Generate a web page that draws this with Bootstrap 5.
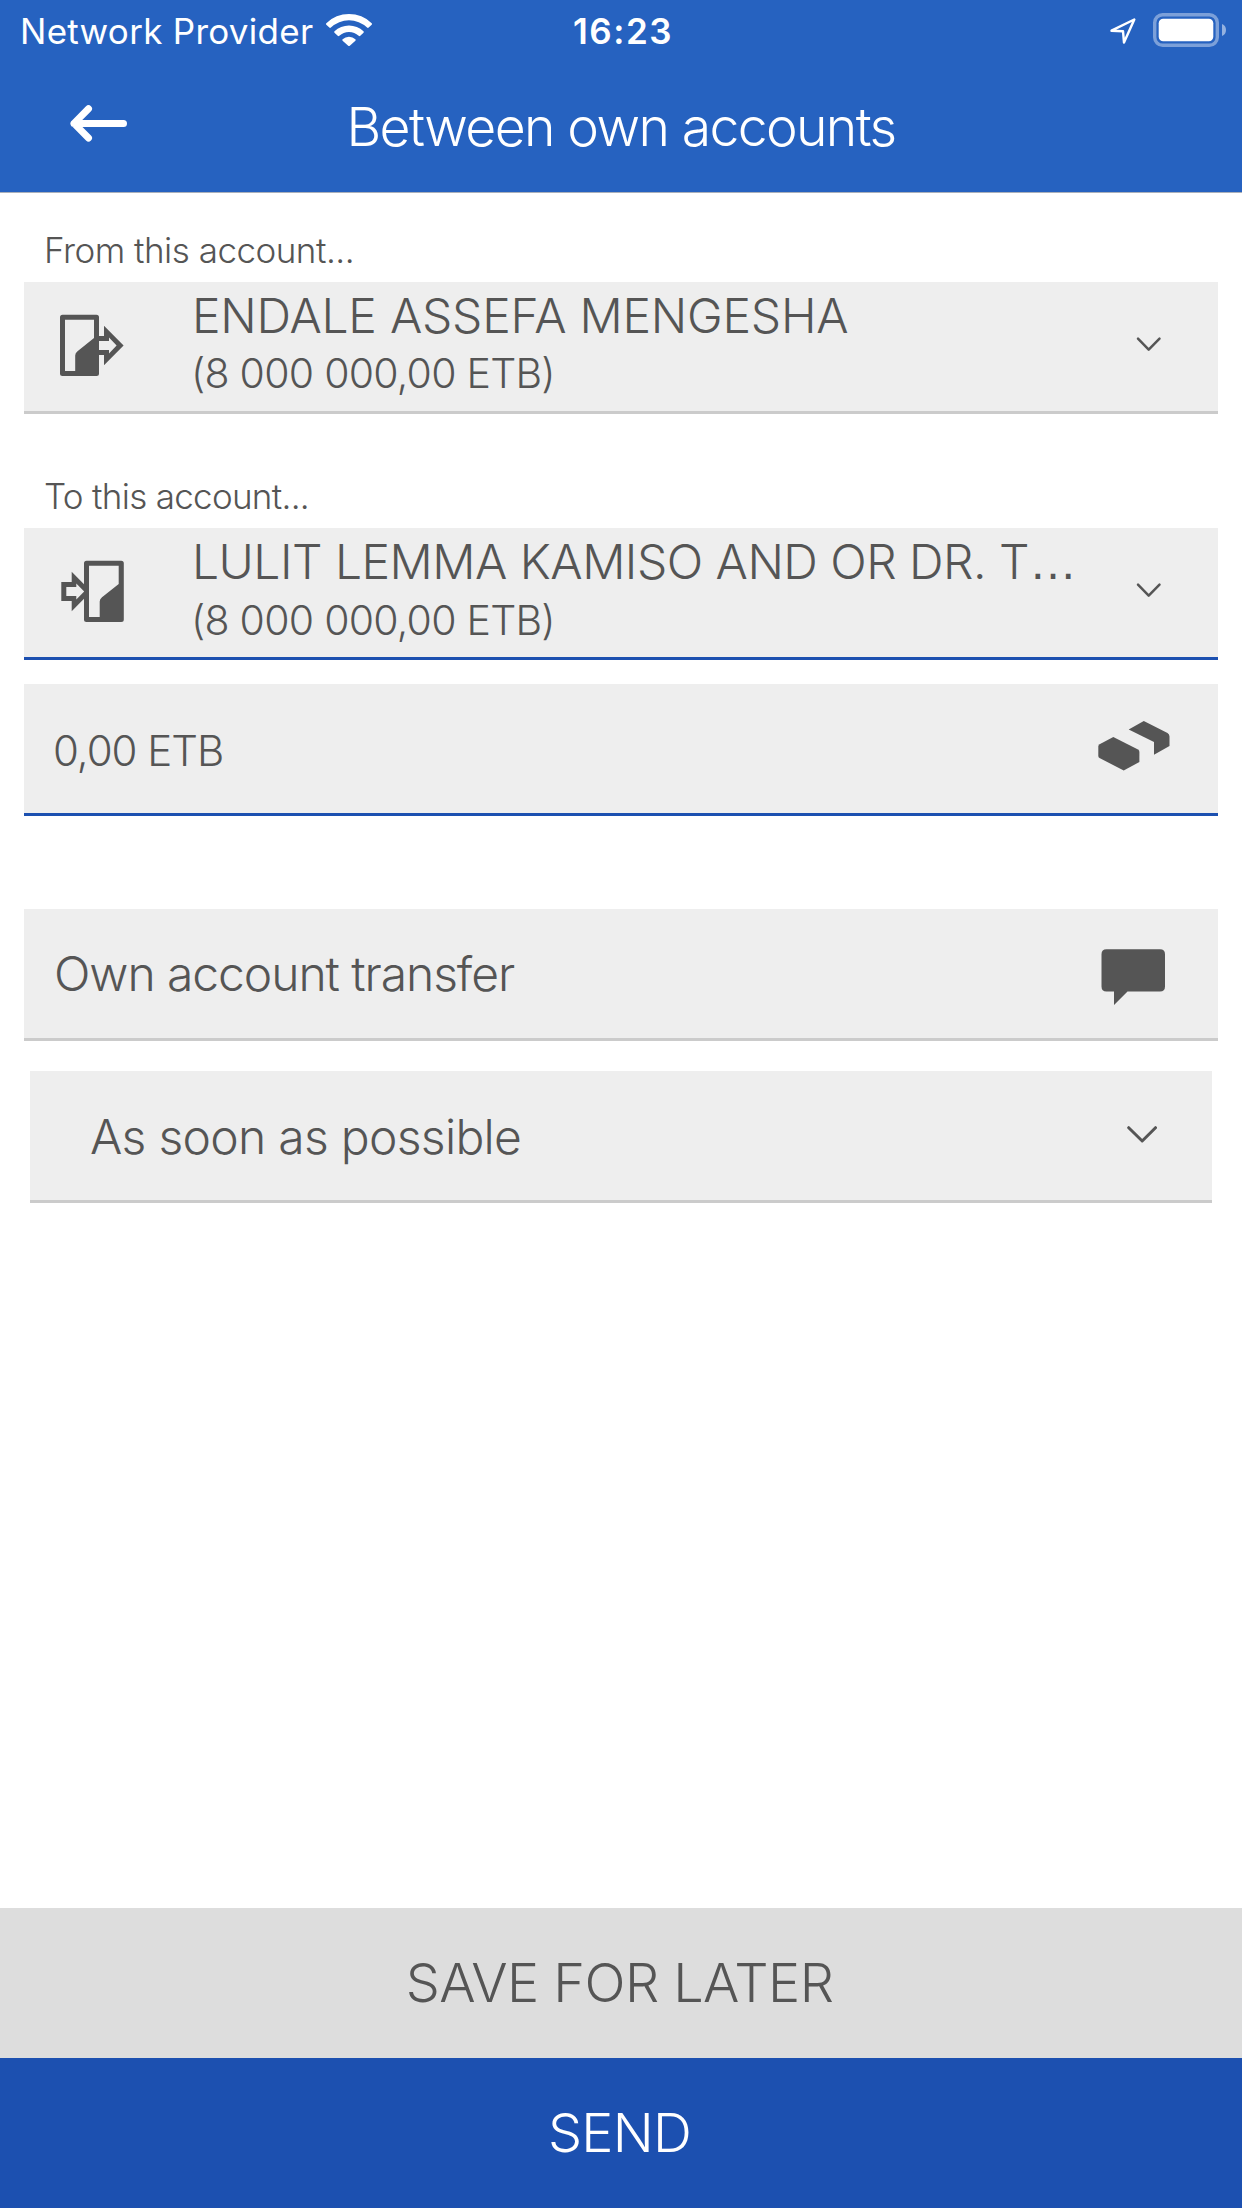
<!DOCTYPE html>
<html lang="en">
<head>
<meta charset="utf-8">
<meta name="viewport" content="width=device-width, initial-scale=1">
<title>Between own accounts</title>
<link href="https://cdn.jsdelivr.net/npm/bootstrap@5.3.0/dist/css/bootstrap.min.css" rel="stylesheet">
<style>
body{font-family:Inter,"Liberation Sans",sans-serif;font-weight:300;color:#555;background:#fff;font-kerning:normal}
svg{display:block;flex:none}
.screen{height:2208px;overflow:hidden}
.app-header{height:193px;background:#2662c0;border-bottom:1px solid #aab0ba}
.status-bar{height:62px;font-size:35px;line-height:62px;font-weight:400;padding:0 16px 0 20px}
.status-side{flex:1 1 0}
.carrier{letter-spacing:.28px}
.clock{font-weight:600;letter-spacing:1.5px}
.wifi{margin-left:12px}
.title-bar{height:130px}
.title-bar .side{width:200px}
.page-title{font-size:53.5px;line-height:129px;font-weight:300;letter-spacing:-1.64px}
.fields{padding:0 24px}
.field-label{height:89px;font-size:35px;line-height:40px;padding:0 0 12px 20px;letter-spacing:-.5px}
.field-label.second{height:114px;letter-spacing:-.7px}
.field-box{height:132px;background:#eee;border-bottom:3px solid #cbcbcb}
.field-box.active{border-bottom-color:#1c50b0}
.account{padding:0 56px 0 36px}
.account-text{width:900px;margin-left:68px;padding-top:4px}
.account-name{font-size:48px;line-height:59px;letter-spacing:-.24px}
.account-name.long{letter-spacing:-.52px}
.dots{font-family:"Liberation Sans",sans-serif;letter-spacing:0}
.account-sum{font-size:41px;line-height:57px;letter-spacing:-.75px;margin-left:-1px}
.amount{margin-top:24px;padding:0 48px 0 29px}
.amount-value{font-size:42px;letter-spacing:-1.01px;line-height:60px;padding-top:4px}
.purpose{margin-top:93px;padding:0 53px 0 30px}
.purpose-text{font-size:48px;letter-spacing:-1.07px;line-height:60px}
.timing{margin:30px 6px 0;padding:0 55px 0 60px}
.timing-text{font-size:48px;letter-spacing:-.71px;line-height:60px;padding-top:3px}
.action{height:150px;border:0;font-size:54px;font-weight:300;line-height:150px;padding:0 3px 0 0}
.action-save{background:#ddd;color:#555;letter-spacing:-.57px}
.action-send{background:#1c50b0;color:#fff;letter-spacing:-.75px}
</style>
</head>
<body>
<div class="screen d-flex flex-column">
  <header class="app-header text-white">
    <div class="status-bar d-flex">
      <div class="status-side d-flex">
        <span class="carrier text-nowrap">Network Provider</span>
        <svg class="wifi" width="48" height="62" viewBox="325 0 48 62" fill="#fff">
          <path d="M326.3 23.2a32.4 32.4 0 0 1 45.4 0q.7.8 0 1.6l-3 2.8q-.8.7-1.6 0a26.2 26.2 0 0 0-36.200 0q-.8.7-1.600 0l-3-2.800q-.7-.8 0-1.600z"/>
          <path d="M334.500 31.200a21 21 0 0 1 29 0q.7.800 0 1.600l-3.200 3q-.8.700-1.600 0a14.200 14.200 0 0 0-19.400 0q-.8.700-1.600 0l-3.200-3q-.7-.8 0-1.600z"/>
          <path d="M342.600 39.300a9.300 9.300 0 0 1 12.800 0q.7.700 0 1.400l-5.600 5q-.8.700-1.600 0l-5.600-5q-.7-.7 0-1.400z"/>
        </svg>
      </div>
      <span class="clock">16:23</span>
      <div class="status-side d-flex justify-content-end">
        <svg width="118" height="62" viewBox="1108 0 118 62">
          <path d="M1111.500 30.700L1134.300 19.500L1124 42.600L1123 31.200Z" fill="none" stroke="#fff" stroke-width="2.400" stroke-linejoin="round"/>
          <rect x="1154.700" y="14.700" width="62.600" height="30.600" rx="8" fill="none" stroke="#fff" stroke-opacity=".4" stroke-width="3.400"/>
          <rect x="1158.700" y="18.700" width="54.600" height="22.600" rx="4.500" fill="#fff"/>
          <path d="M1222 24q4 1.500 4 6t-4 6z" fill="#fff" fill-opacity=".5"/>
        </svg>
      </div>
    </div>
    <div class="title-bar d-flex justify-content-between">
      <div class="side">
        <svg width="150" height="130" viewBox="0 62 150 130" fill="none" stroke="#fff" stroke-width="7" stroke-linecap="round" stroke-linejoin="round"><path d="M74 123.400H123.500M88.500 108.700L74 123.400L88.500 138"/></svg>
      </div>
      <h1 class="page-title m-0 text-nowrap">Between own accounts</h1>
      <div class="side"></div>
    </div>
  </header>

  <main class="fields flex-grow-1">
    <div class="field-label d-flex align-items-end">From this account...</div>
    <div class="field-box account d-flex">
      <svg width="64" height="129" viewBox="60 282 64 129">
        <path fill="#555" fill-rule="evenodd" d="M62.500 314.700H96.500Q99 314.700 99 317.200V373.500Q99 376 96.500 376H62.500Q60 376 60 373.500V317.200Q60 314.700 62.500 314.700ZM65 319.800V371H75.200V355.500Q75.200 353 77.500 351.200L94 338V319.800Z"/>
        <path fill="#555" fill-rule="evenodd" d="M98 336H104V325.800L123.600 345.500L104 365.200V355H98ZM98 341V350H109V353.500L116.600 345.500L109 337.500V341Z"/>
      </svg>
      <div class="account-text text-nowrap">
        <div class="account-name">ENDALE ASSEFA MENGESHA</div>
        <div class="account-sum">(8 000 000,00 ETB)</div>
      </div>
      <svg class="ms-auto" width="26" height="129" viewBox="1136 282 26 129" fill="none" stroke="#555" stroke-width="2.500" stroke-linecap="round" stroke-linejoin="round"><path d="M1138 338.700L1148.700 349.700L1159.500 338.700"/></svg>
    </div>

    <div class="field-label second d-flex align-items-end">To this account...</div>
    <div class="field-box active account d-flex">
      <svg width="64" height="129" viewBox="60 528 64 129">
        <path fill="#555" fill-rule="evenodd" d="M86.500 560.700H121.300Q123.800 560.700 123.800 563.200V619.500Q123.800 622 121.300 622H86.500Q84 622 84 619.500V563.200Q84 560.700 86.500 560.700ZM89 565.800V617H99.700V601.500Q99.700 599 102 597.200L118.700 584V565.800Z"/>
        <path fill="#555" fill-rule="evenodd" d="M61.300 582H71.700V571.800L85 585.200V597.800L71.700 611.200V601H61.300ZM66.300 587V596H76.300V599.500L84.200 591.500L76.300 583.500V587Z"/>
      </svg>
      <div class="account-text text-nowrap">
        <div class="account-name long">LULIT LEMMA KAMISO AND OR DR. T<span class="dots">…</span></div>
        <div class="account-sum">(8 000 000,00 ETB)</div>
      </div>
      <svg class="ms-auto" width="26" height="129" viewBox="1136 528 26 129" fill="none" stroke="#555" stroke-width="2.500" stroke-linecap="round" stroke-linejoin="round"><path d="M1138 584.700L1148.700 595.700L1159.500 584.700"/></svg>
    </div>

    <div class="field-box active amount d-flex align-items-center justify-content-between">
      <div class="amount-value">0,00 ETB</div>
      <svg width="72" height="129" viewBox="1098 684 72 129" fill="#555">
        <path d="M1098.300 746.500Q1098.300 745 1099.600 744.200L1113.300 737L1138 749.600Q1139.400 750.400 1139.400 752V762L1123.700 770.500L1099.500 758Q1098.300 757.300 1098.300 756Z"/>
        <path d="M1128.700 729.600L1143.800 721L1167.500 733Q1169.500 734.200 1169.500 736.500V746L1154 754.700V742Z"/>
      </svg>
    </div>

    <div class="field-box purpose d-flex align-items-center justify-content-between">
      <div class="purpose-text">Own account transfer</div>
      <svg width="64" height="129" viewBox="1101 909 64 129" fill="#555"><path d="M1106.500 949.300H1160Q1165 949.300 1165 954.300V986.500Q1165 991.500 1160 991.500H1127.500L1114 1005V991.500H1106.500Q1101.500 991.500 1101.500 986.500V954.300Q1101.500 949.300 1106.500 949.300Z"/></svg>
    </div>

    <div class="field-box timing d-flex align-items-center justify-content-between">
      <div class="timing-text">As soon as possible</div>
      <svg width="30" height="129" viewBox="1127 1071 30 129" fill="none" stroke="#555" stroke-width="3" stroke-linecap="round" stroke-linejoin="round"><path d="M1128.700 1127.700L1142.200 1141L1155.500 1127.700"/></svg>
    </div>
  </main>

  <footer class="d-grid">
    <button type="button" class="action action-save">SAVE FOR LATER</button>
    <button type="button" class="action action-send">SEND</button>
  </footer>
</div>
<script src="https://cdn.jsdelivr.net/npm/bootstrap@5.3.0/dist/js/bootstrap.bundle.min.js"></script>
</body>
</html>
